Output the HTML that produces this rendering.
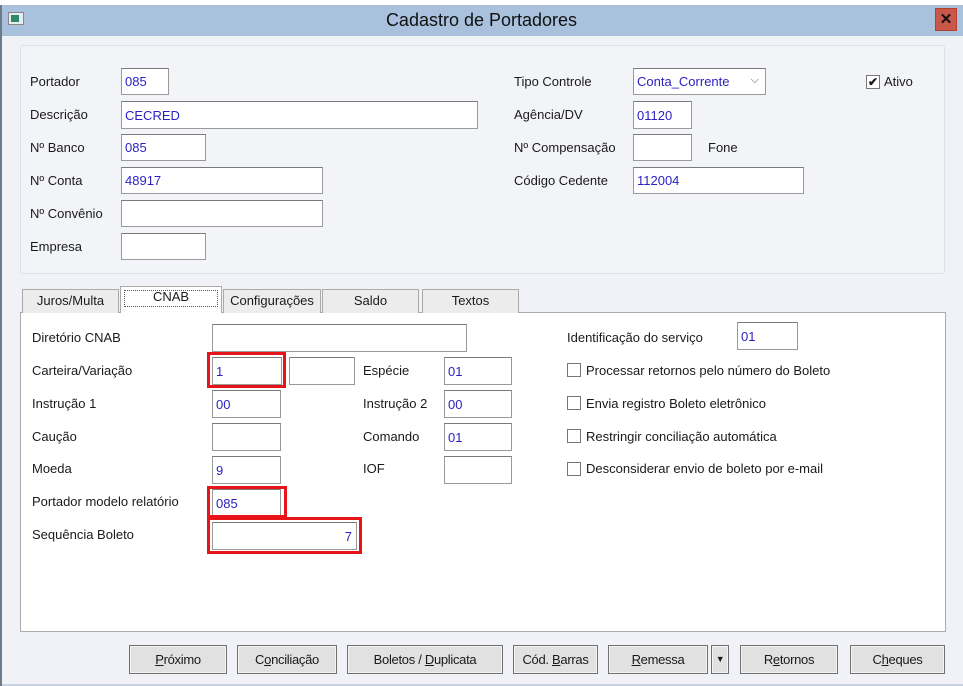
<!DOCTYPE html>
<html><head><meta charset="utf-8"><style>
*{box-sizing:border-box;margin:0;padding:0}
body{width:963px;height:686px;overflow:hidden;background:#f0f2f7;font-family:"Liberation Sans",sans-serif;font-size:13px;color:#1a1a1a;position:relative}
.a{position:absolute}
.lbl{position:absolute;line-height:16px;white-space:nowrap}
.in{position:absolute;background:#fff;border:1px solid #9a9a9a;border-top-color:#7a7a7a;color:#2a1fc0;padding-left:3px;display:flex;align-items:center;font-size:13px}
.red{position:absolute;border:3px solid #e8141a}
.cb{position:absolute;width:14px;height:14px;border:1px solid #777;background:#fff}
.tab{position:absolute;top:289px;height:24px;border:1px solid #aaa;border-bottom:none;background:#ececec;text-align:center;line-height:22px}
.btn{position:absolute;top:645px;height:29px;border:1px solid #707070;background:#e1e1e1;text-align:center;line-height:27px;font-family:"Liberation Sans Narrow","Liberation Sans",sans-serif;font-size:13px;letter-spacing:-0.3px;box-shadow:inset 0 0 0 1px #f4f4f4}
u{text-decoration:underline}
</style></head><body>
<div class="a" style="left:0;top:0;width:963px;height:5px;background:#fff"></div>
<div class="a" style="left:0;top:5px;width:963px;height:31px;background:#a9c1dd"></div>
<div class="a" style="left:0;top:5px;width:2px;height:681px;background:#6d7a8a"></div>
<div class="a" style="left:8px;top:12px;width:16px;height:13px;background:#e8ecf0;border:1px solid #888"><div style="margin:2px;width:8px;height:7px;background:#2a8a6a"></div></div>
<div class="a" style="left:0;top:10px;width:963px;text-align:center;font-size:18px;color:#111">Cadastro de Portadores</div>
<div class="a" style="left:935px;top:8px;width:22px;height:23px;background:#c9574a;border:1px solid #b04030;color:#111;font-weight:bold;text-align:center;line-height:21px;font-size:15px">✕</div>

<div class="a" style="left:20px;top:45px;width:925px;height:229px;border:1px solid #dde0e8;border-radius:3px;background:#f3f4f8"></div>
<div class="lbl" style="left:30px;top:74px">Portador</div><div class="in" style="left:121px;top:68px;width:48px;height:27px">085</div>
<div class="lbl" style="left:30px;top:107px">Descrição</div><div class="in" style="left:121px;top:101px;width:357px;height:28px">CECRED</div>
<div class="lbl" style="left:30px;top:140px">Nº Banco</div><div class="in" style="left:121px;top:134px;width:85px;height:27px">085</div>
<div class="lbl" style="left:30px;top:173px">Nº Conta</div><div class="in" style="left:121px;top:167px;width:202px;height:27px">48917</div>
<div class="lbl" style="left:30px;top:206px">Nº Convênio</div><div class="in" style="left:121px;top:200px;width:202px;height:27px"></div>
<div class="lbl" style="left:30px;top:239px">Empresa</div><div class="in" style="left:121px;top:233px;width:85px;height:27px"></div>

<div class="lbl" style="left:514px;top:74px">Tipo Controle</div><div class="in" style="left:633px;top:68px;width:133px;height:27px">Conta_Corrente<span style="position:absolute;right:6px;top:5px;color:#555;font-size:11px">⌵</span></div>
<div class="lbl" style="left:514px;top:107px">Agência/DV</div><div class="in" style="left:633px;top:101px;width:59px;height:28px">01120</div>
<div class="lbl" style="left:514px;top:140px">Nº Compensação</div><div class="in" style="left:633px;top:134px;width:59px;height:27px"></div><div class="lbl" style="left:708px;top:140px">Fone</div>
<div class="lbl" style="left:514px;top:173px">Código Cedente</div><div class="in" style="left:633px;top:167px;width:171px;height:27px">112004</div>
<div class="cb" style="left:866px;top:75px;line-height:12px;text-align:center;font-size:12px;font-weight:bold">✔</div><div class="lbl" style="left:884px;top:74px">Ativo</div>

<div class="a" style="left:20px;top:312px;width:926px;height:320px;background:#fff;border:1px solid #aaa"></div>
<div class="tab" style="left:22px;width:97px">Juros/Multa</div>
<div class="tab" style="left:223px;width:98px">Configurações</div>
<div class="tab" style="left:322px;width:97px">Saldo</div>
<div class="tab" style="left:422px;width:97px">Textos</div>
<div class="tab" style="left:120px;top:286px;width:102px;height:27px;background:#fff;line-height:20px"><div style="position:absolute;left:3px;top:3px;right:3px;bottom:6px;border:1px dotted #555"></div>CNAB</div>

<div class="lbl" style="left:32px;top:330px">Diretório CNAB</div><div class="in" style="left:212px;top:324px;width:255px;height:28px"></div>
<div class="lbl" style="left:32px;top:363px">Carteira/Variação</div><div class="in" style="left:212px;top:357px;width:70px;height:28px">1</div><div class="red" style="left:207px;top:352px;width:79px;height:36px"></div>
<div class="in" style="left:289px;top:357px;width:66px;height:28px"></div>
<div class="lbl" style="left:363px;top:363px">Espécie</div><div class="in" style="left:444px;top:357px;width:68px;height:28px">01</div>
<div class="lbl" style="left:32px;top:396px">Instrução 1</div><div class="in" style="left:212px;top:390px;width:69px;height:28px">00</div>
<div class="lbl" style="left:363px;top:396px">Instrução 2</div><div class="in" style="left:444px;top:390px;width:68px;height:28px">00</div>
<div class="lbl" style="left:32px;top:429px">Caução</div><div class="in" style="left:212px;top:423px;width:69px;height:28px"></div>
<div class="lbl" style="left:363px;top:429px">Comando</div><div class="in" style="left:444px;top:423px;width:68px;height:28px">01</div>
<div class="lbl" style="left:32px;top:461px">Moeda</div><div class="in" style="left:212px;top:456px;width:69px;height:28px">9</div>
<div class="lbl" style="left:363px;top:461px">IOF</div><div class="in" style="left:444px;top:456px;width:68px;height:28px"></div>
<div class="lbl" style="left:32px;top:494px">Portador modelo relatório</div><div class="in" style="left:212px;top:489px;width:69px;height:28px">085</div><div class="red" style="left:207px;top:486px;width:80px;height:32px"></div>
<div class="lbl" style="left:32px;top:527px">Sequência Boleto</div><div class="in" style="left:212px;top:522px;width:145px;height:28px;justify-content:flex-end;padding-right:4px">7</div><div class="red" style="left:207px;top:517px;width:155px;height:37px"></div>

<div class="lbl" style="left:567px;top:330px">Identificação do serviço</div><div class="in" style="left:737px;top:322px;width:61px;height:28px">01</div>
<div class="cb" style="left:567px;top:363px"></div><div class="lbl" style="left:586px;top:363px">Processar retornos pelo número do Boleto</div>
<div class="cb" style="left:567px;top:396px"></div><div class="lbl" style="left:586px;top:396px">Envia registro Boleto eletrônico</div>
<div class="cb" style="left:567px;top:429px"></div><div class="lbl" style="left:586px;top:429px">Restringir conciliação automática</div>
<div class="cb" style="left:567px;top:462px"></div><div class="lbl" style="left:586px;top:461px">Desconsiderar envio de boleto por e-mail</div>

<div class="btn" style="left:129px;width:98px"><u>P</u>róximo</div>
<div class="btn" style="left:237px;width:100px">C<u>o</u>nciliação</div>
<div class="btn" style="left:347px;width:156px">Boletos / <u>D</u>uplicata</div>
<div class="btn" style="left:513px;width:85px">Cód. <u>B</u>arras</div>
<div class="btn" style="left:608px;width:100px"><u>R</u>emessa</div>
<div class="btn" style="left:711px;width:18px;font-size:9px">▼</div>
<div class="btn" style="left:740px;width:98px">R<u>e</u>tornos</div>
<div class="btn" style="left:850px;width:95px">C<u>h</u>eques</div>
<div class="a" style="left:2px;top:684px;width:961px;height:2px;background:#c8d4e4"></div>
</body></html>
